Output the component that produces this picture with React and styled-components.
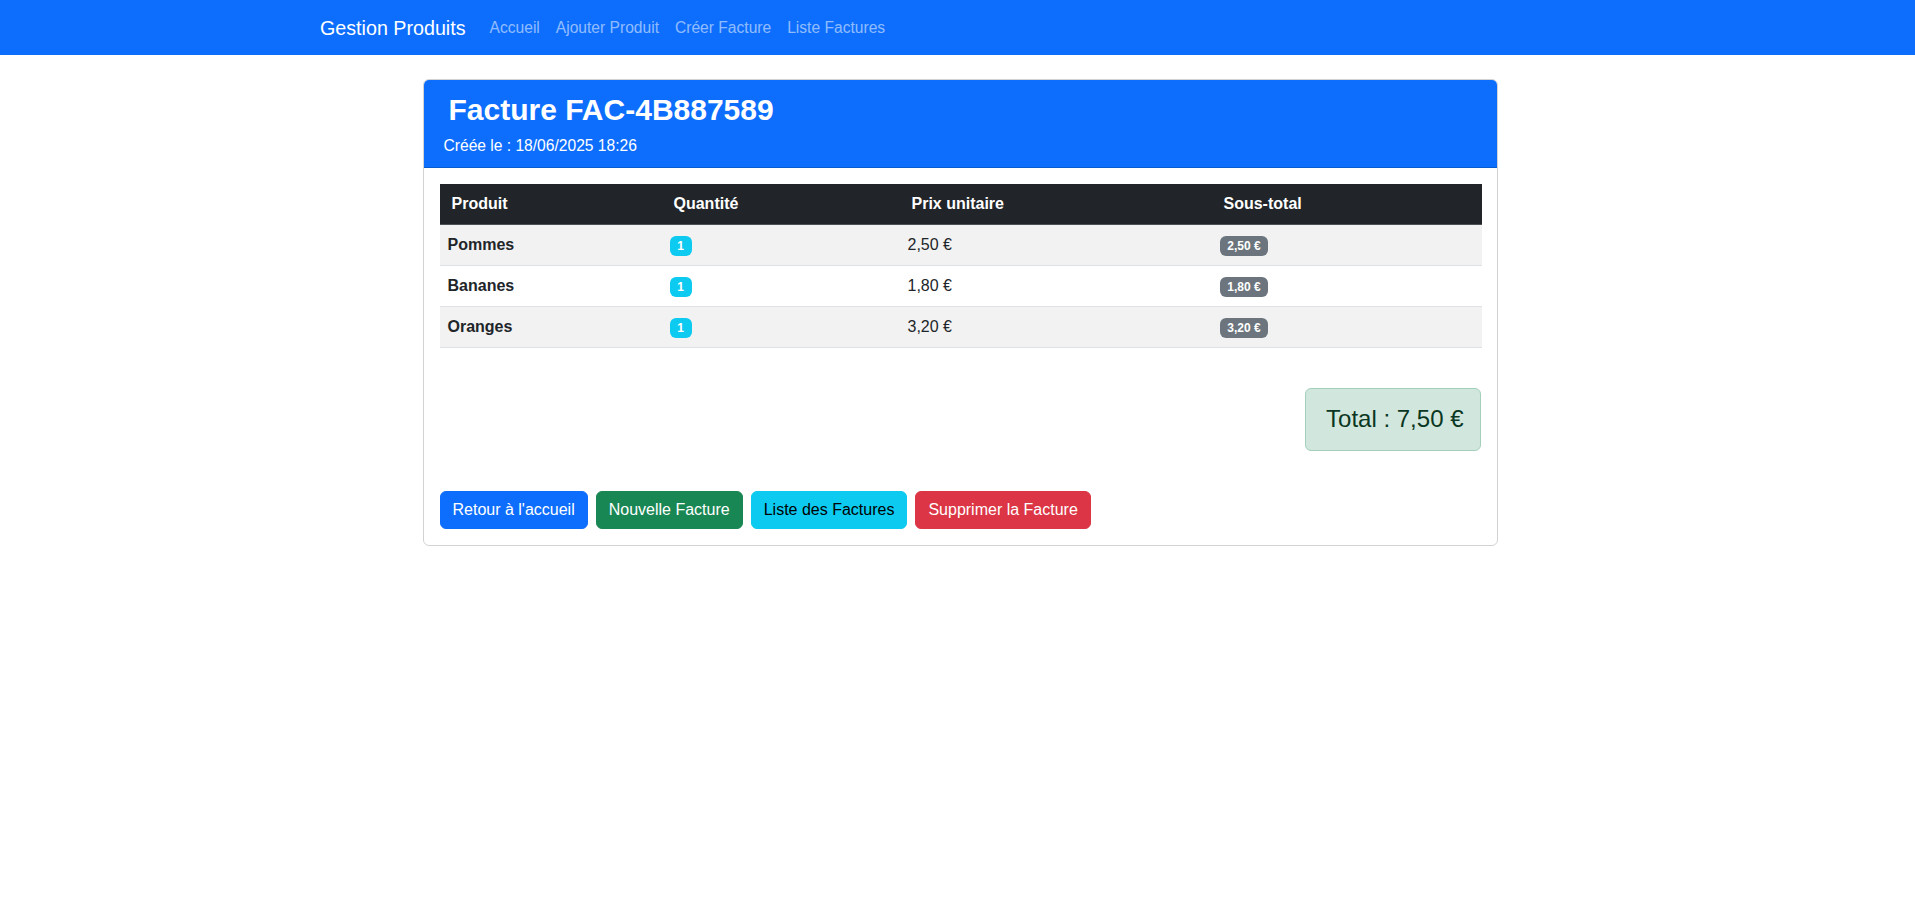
import React from 'react';
import styled, { createGlobalStyle } from 'styled-components';

const GlobalStyle = createGlobalStyle`
  * { box-sizing: border-box; }
  body {
    margin: 0;
    font-family: "Liberation Sans", Arial, sans-serif;
    font-size: 16px;
    line-height: 1.5;
    color: #212529;
    background: #fff;
  }
`;

const Navbar = styled.nav`
  background-color: #0d6efd;
  height: 55px;
  display: flex;
  align-items: center;
`;

const NavInner = styled.div`
  width: 1275px;
  margin: 0 auto;
  display: flex;
  align-items: center;
`;

const Brand = styled.a`
  color: #fff;
  font-size: 19.7px;
  line-height: 30px;
  margin-right: 16px;
  text-decoration: none;
`;

const NavLink = styled.a`
  color: rgba(255, 255, 255, 0.55);
  padding: 8px;
  font-size: 15.6px;
  line-height: 24px;
  text-decoration: none;
`;

const Card = styled.div`
  width: 1075px;
  margin: 24px 0 0 calc(50% - 535px);
  border: 1px solid rgba(0, 0, 0, 0.175);
  border-radius: 6px;
  overflow: hidden;
`;

const CardHeader = styled.div`
  background-color: #0d6efd;
  color: #fff;
  padding: 12px 16px 9px 20px;
  border-bottom: 1px solid rgba(0, 0, 0, 0.175);
`;

const Title = styled.h2`
  margin: 0 0 6px 5px;
  font-size: 30px;
  line-height: 36px;
  font-weight: 700;
`;

const Subtitle = styled.div`
  font-size: 15.6px;
  line-height: 24px;
`;

const CardBody = styled.div`
  padding: 16px;
`;

const Table = styled.table`
  width: 100%;
  table-layout: fixed;
  border-collapse: collapse;
`;

const Th = styled.th`
  width: ${p => p.$w}px;
  background-color: #212529;
  color: #fff;
  text-align: left;
  font-weight: 700;
  padding: 8px 12px;
  line-height: 24px;
  border-bottom: 1px solid #4d5154;
`;

const Tr = styled.tr`
  background-color: ${p => (p.$striped ? '#f2f2f2' : '#fff')};
`;

const Td = styled.td`
  padding: 8px;
  line-height: 24px;
  border-bottom: 1px solid #dee2e6;
  font-weight: ${p => (p.$bold ? 700 : 400)};
`;

const Badge = styled.span`
  display: inline-block;
  padding: 0.35em 0.65em;
  font-size: 12px;
  font-weight: 700;
  line-height: 1;
  color: #fff;
  border-radius: 6px;
  background-color: ${p => p.$bg};
`;

const TotalRow = styled.div`
  margin-top: 40px;
  display: flex;
  justify-content: flex-end;
`;

const TotalBox = styled.div`
  background-color: #d1e7dd;
  border: 1px solid #a3cfbb;
  color: #0a3622;
  border-radius: 6px;
  padding: 16px 16px 16px 20px;
  margin-bottom: 16px;
  font-size: 24px;
  line-height: 1.2;
  font-weight: 500;
`;

const ButtonRow = styled.div`
  margin-top: 24px;
  display: flex;
  gap: 8px;
`;

const Button = styled.button`
  font-family: inherit;
  font-size: 16px;
  line-height: 24px;
  padding: 6px 12px;
  border: 1px solid ${p => p.$bg};
  background-color: ${p => p.$bg};
  color: ${p => p.$fg || '#fff'};
  border-radius: 6px;
  cursor: pointer;
`;

const items = [
  { name: 'Pommes', qty: 1, price: '2,50 €', sub: '2,50 €' },
  { name: 'Bananes', qty: 1, price: '1,80 €', sub: '1,80 €' },
  { name: 'Oranges', qty: 1, price: '3,20 €', sub: '3,20 €' },
];

export default function App() {
  return (
    <>
      <GlobalStyle />
      <Navbar>
        <NavInner>
          <Brand href="#">Gestion Produits</Brand>
          <NavLink href="#">Accueil</NavLink>
          <NavLink href="#">Ajouter Produit</NavLink>
          <NavLink href="#">Créer Facture</NavLink>
          <NavLink href="#">Liste Factures</NavLink>
        </NavInner>
      </Navbar>

      <Card>
        <CardHeader>
          <Title>Facture FAC-4B887589</Title>
          <Subtitle>Créée le : 18/06/2025 18:26</Subtitle>
        </CardHeader>
        <CardBody>
          <Table>
            <thead>
              <tr>
                <Th $w={222}>Produit</Th>
                <Th $w={238}>Quantité</Th>
                <Th $w={312}>Prix unitaire</Th>
                <Th $w={270}>Sous-total</Th>
              </tr>
            </thead>
            <tbody>
              {items.map((it, i) => (
                <Tr key={it.name} $striped={i % 2 === 0}>
                  <Td $bold>{it.name}</Td>
                  <Td><Badge $bg="#0dcaf0">{it.qty}</Badge></Td>
                  <Td>{it.price}</Td>
                  <Td><Badge $bg="#6c757d">{it.sub}</Badge></Td>
                </Tr>
              ))}
            </tbody>
          </Table>

          <TotalRow>
            <TotalBox>Total : 7,50 €</TotalBox>
          </TotalRow>

          <ButtonRow>
            <Button $bg="#0d6efd">Retour à l'accueil</Button>
            <Button $bg="#198754">Nouvelle Facture</Button>
            <Button $bg="#0dcaf0" $fg="#000">Liste des Factures</Button>
            <Button $bg="#dc3545">Supprimer la Facture</Button>
          </ButtonRow>
        </CardBody>
      </Card>
    </>
  );
}
